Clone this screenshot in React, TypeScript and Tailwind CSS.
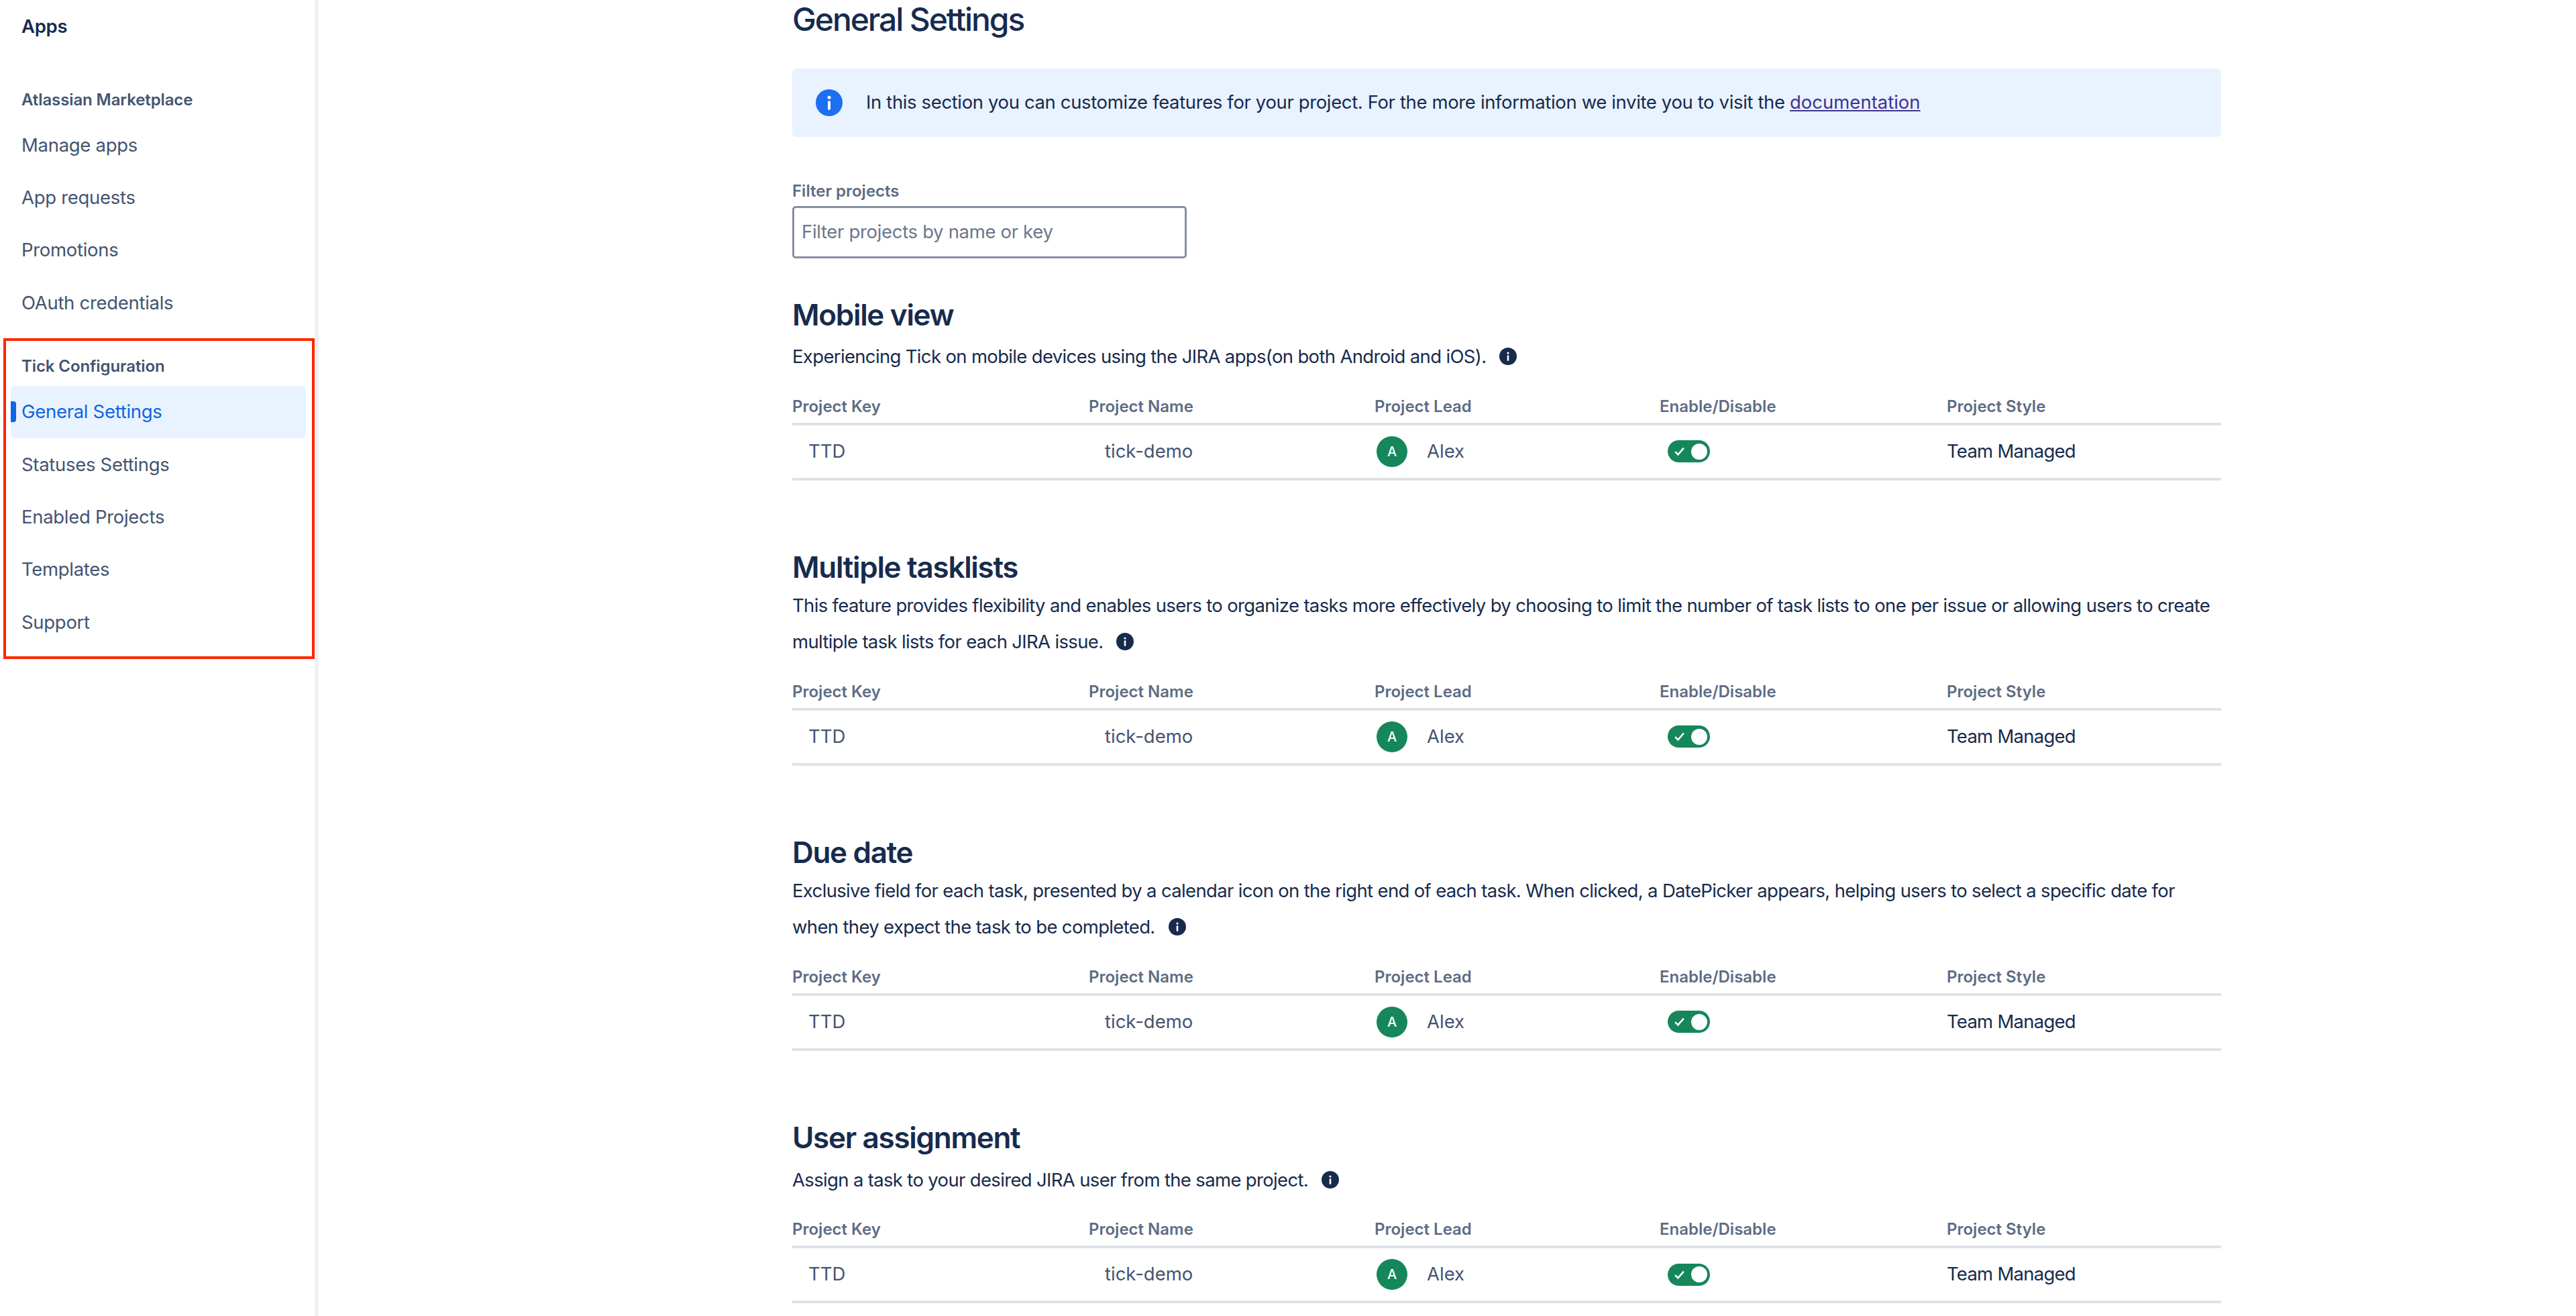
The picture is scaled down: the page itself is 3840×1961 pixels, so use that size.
import React from "react";

const FONT = "font-['Inter','Liberation_Sans',sans-serif]";

const InfoIcon = ({ className }: { className: string }) => (
  <svg viewBox="0 0 24 24" className={className} fill="none">
    <circle cx="12" cy="12" r="12" fill="currentColor" />
    <circle cx="12" cy="7.4" r="1.5" fill="#fff" />
    <rect x="10.8" y="10.4" width="2.4" height="8" rx="1" fill="#fff" />
  </svg>
);

const NavItem = ({ label, active = false }: { label: string; active?: boolean }) => (
  <div
    className={`relative ml-4 mr-[13px] flex h-[78.4px] items-center rounded-md pl-4 text-[27.5px] tracking-[-0.3px] ${
      active ? "bg-[#e9f2ff] text-[#0c66e4]" : "text-[#44546f]"
    }`}
  >
    {active && (
      <span className="absolute left-0 top-[23px] h-[31px] w-2 rounded-r-[4px] bg-[#0c66e4]" />
    )}
    {label}
  </div>
);

const Sidebar = () => (
  <aside className="relative w-[475px] shrink-0 border-r-[6px] border-[#eff1f5]">
    <div className="flex h-20 items-center pl-8 text-[27.5px] font-semibold tracking-[-0.3px] text-[#172b4d]">Apps</div>
    <div className="flex h-[97px] items-center pl-8 pt-[41px] text-[24px] font-semibold tracking-[-0.1px] text-[#44546f]">
      Atlassian Marketplace
    </div>
    {["Manage apps", "App requests", "Promotions", "OAuth credentials"].map((item) => (
      <NavItem key={item} label={item} />
    ))}
    <div className="flex h-[84px] items-center pl-8 pt-[26px] text-[24px] font-semibold tracking-[-0.1px] text-[#44546f]">
      Tick Configuration
    </div>
    <NavItem label="General Settings" active />
    {["Statuses Settings", "Enabled Projects", "Templates", "Support"].map((item) => (
      <NavItem key={item} label={item} />
    ))}
    <div className="absolute left-[5px] top-[504px] h-[478px] w-[464px] border-4 border-[#ff2600]" />
  </aside>
);

const ProjectTable = () => (
  <div className="mt-[23px]">
    <div className="grid h-[52px] grid-cols-[442px_426px_425px_428px_1fr] items-center border-b-4 border-[#dfe1e6] text-[24px] font-semibold text-[#5e6c84]">
      <div>Project Key</div>
      <div>Project Name</div>
      <div>Project Lead</div>
      <div>Enable/Disable</div>
      <div>Project Style</div>
    </div>
    <div className="grid h-[82px] grid-cols-[442px_426px_425px_428px_1fr] items-center border-b-4 border-[#dfe1e6] text-[27.5px] text-[#44546f]">
      <div className="pl-6">TTD</div>
      <div className="pl-6">tick-demo</div>
      <div className="flex items-center pl-[3px]">
        <span className="flex h-[46px] w-[46px] items-center justify-center rounded-full bg-[#15875b] text-[20px] font-medium text-white">
          A
        </span>
        <span className="ml-[29px]">Alex</span>
      </div>
      <div className="pl-3">
        <div className="flex h-[33px] w-[63px] items-center justify-between rounded-full bg-[#15875b] pl-[9px] pr-1">
          <svg viewBox="0 0 16 16" className="h-[17px] w-[17px]" fill="none" stroke="#fff" strokeWidth="2.4">
            <path d="M2 8.5l4 4 8-9" />
          </svg>
          <span className="h-[24px] w-[24px] rounded-full bg-white" />
        </div>
      </div>
      <div className="tracking-[-0.75px] text-[#172b4d]">Team Managed</div>
    </div>
  </div>
);

const Section = ({
  title,
  lines,
  className,
  single = false,
}: {
  title: string;
  lines: string[];
  className: string;
  single?: boolean;
}) => (
  <section className={className}>
    <h2 className="flex h-14 items-center pb-[3px] text-[44px] font-semibold leading-none tracking-[-1.3px] text-[#172b4d]">
      {title}
    </h2>
    <div className={`text-[27.5px] leading-[54.5px] tracking-[-0.66px] text-[#172b4d] ${single ? "pt-[6px]" : ""}`}>
      {lines.map((line, i) => (
        <div key={line} className="flex items-center whitespace-nowrap">
          {line}
          {i === lines.length - 1 && <InfoIcon className="ml-5 h-[26px] w-[26px] text-[#172b4d]" />}
        </div>
      ))}
    </div>
    <ProjectTable />
  </section>
);

export default function App() {
  return (
    <div className={`flex h-[1961px] overflow-hidden bg-white ${FONT}`}>
      <Sidebar />
      <main className="ml-[706px] w-[2130px] shrink-0">
        <h1 className="flex h-[58px] items-center text-[48px] font-medium leading-[58px] tracking-[-2.1px] text-[#172b4d]">
          General Settings
        </h1>
        <div className="mt-[44px] flex h-[102px] items-center rounded-md bg-[#e9f2ff] pl-[35px] text-[27.5px] text-[#172b4d]">
          <InfoIcon className="h-10 w-10 text-[#1d6ff2]" />
          <span className="ml-[35px] tracking-[-0.37px]">
            In this section you can customize features for your project. For the more information we invite you to visit the{" "}
            <a className="tracking-normal text-[#403294] underline">documentation</a>
          </span>
        </div>
        <label className="mt-[66px] flex h-[30px] items-center text-[24px] font-semibold text-[#5e6c84]">
          Filter projects
        </label>
        <div className="mt-[7px] flex h-[78px] w-[588px] items-center rounded-[5px] border-[3px] border-[#8590a2] pl-[11px] text-[27.5px] tracking-[-0.33px] text-[#6b778c]">
          Filter projects by name or key
        </div>
        <Section
          className="mt-[57px]"
          title="Mobile view"
          single
          lines={["Experiencing Tick on mobile devices using the JIRA apps(on both Android and iOS)."]}
        />
        <Section
          className="mt-[103px]"
          title="Multiple tasklists"
          lines={[
            "This feature provides flexibility and enables users to organize tasks more effectively by choosing to limit the number of task lists to one per issue or allowing users to create",
            "multiple task lists for each JIRA issue.",
          ]}
        />
        <Section
          className="mt-[103px]"
          title="Due date"
          lines={[
            "Exclusive field for each task, presented by a calendar icon on the right end of each task. When clicked, a DatePicker appears, helping users to select a specific date for",
            "when they expect the task to be completed.",
          ]}
        />
        <Section
          className="mt-[103px]"
          title="User assignment"
          single
          lines={["Assign a task to your desired JIRA user from the same project."]}
        />
      </main>
    </div>
  );
}
